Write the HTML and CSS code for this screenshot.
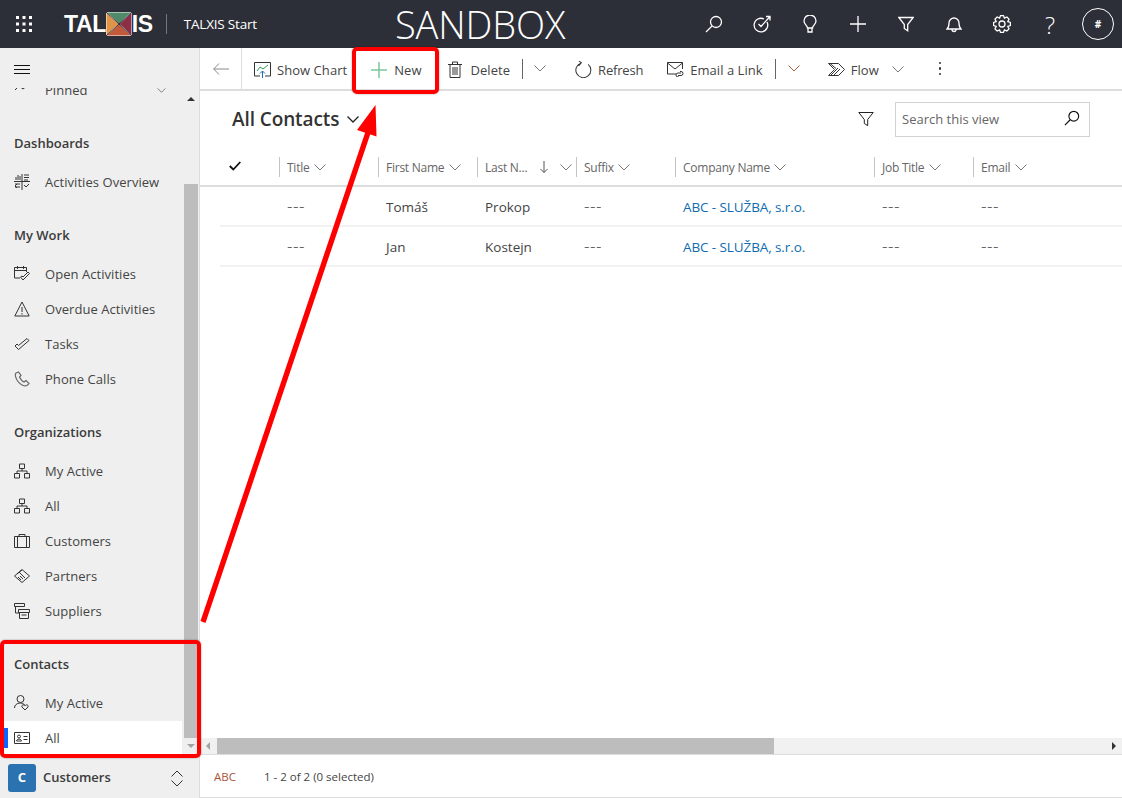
FILE: index.html
```html
<!DOCTYPE html>
<html lang="en">
<head>
    <meta charset="UTF-8">
    <meta name="viewport" content="width=device-width, initial-scale=1.0">
    <title>All Contacts - TALXIS Start</title>
    <link rel="stylesheet" href="styles.css">
</head>
<body>
    <svg class="sprites" width="0" height="0">
        <symbol id="chev" viewBox="0 0 12 7"><path d="M.5.5 6 6 11.500.5"/></symbol>
        <symbol id="org" viewBox="0 0 16 16"><path d="M5.500 1h5v4.500h-5zM.5 10.500h5V15h-5zM10.500 10.500h5V15h-5zM8 5.500V8M3 10.500V8h10v2.500"/></symbol>
        <symbol id="loupe" viewBox="0 0 18 18"><circle cx="11" cy="7" r="5.500"/><path d="M7 11 1 17"/></symbol>
        <symbol id="funnel" viewBox="0 0 16 16"><path d="M.8 1.500h14.400L9.700 8.500v6.200L6.300 12.500v-4z"/></symbol>
    </svg>

    <header class="topbar">
        <svg class="waffle" width="16" height="16" viewBox="0 0 16 16">
            <path d="M0 0h3v3H0zM6.500 0h3v3h-3zM13 0h3v3h-3zM0 6.500h3v3H0zM6.500 6.500h3v3h-3zM13 6.500h3v3h-3zM0 13h3v3H0zM6.500 13h3v3h-3zM13 13h3v3h-3z"/>
        </svg>
        <div class="logo">
            <span>TAL</span>
            <svg width="26" height="24" viewBox="0 0 26 24">
                <path fill="#4f8a6b" d="M0 0h26L13 12z"/>
                <path fill="#e09447" d="M0 0v24l13-12z"/>
                <path fill="#8c2f45" d="M26 0v24L13 12z"/>
                <path fill="#c2593b" d="M0 24h26L13 12z"/>
                <path stroke="#2d2f38" d="M0 0l26 24M26 0 0 24"/>
            </svg>
            <span>IS</span>
        </div>
        <div class="app-name">TALXIS Start</div>
        <div class="env-name">SANDBOX</div>
        <nav class="top-icons">
            <a><svg width="18" height="18"><use href="#loupe"/></svg></a>
            <a><svg width="18" height="18" viewBox="0 0 18 18"><path d="M14 7a6.800 6.800 0 1 1-3-3M5.500 9l2.500 2.500L17 1.500M13 1.500h4v4"/></svg></a>
            <a><svg width="14" height="18" viewBox="0 0 14 18"><path d="M4.500 13c0-2.500-3.500-3.500-3.500-7a6 6 0 0 1 12 0c0 3.500-3.500 4.500-3.500 7zM5 13v4h4v-4"/></svg></a>
            <a><svg width="18" height="18" viewBox="0 0 18 18"><path d="M9 1v16M1 9h16"/></svg></a>
            <a><svg width="16" height="16"><use href="#funnel"/></svg></a>
            <a><svg width="16" height="18" viewBox="0 0 16 18"><path d="M1 14c2-1.500 2-3 2-6a5 5 0 0 1 10 0c0 3 0 4.500 2 6zM6 14.500a2 2 0 0 0 4 0"/></svg></a>
            <a><svg width="18" height="18" viewBox="0 0 18 18"><circle cx="9" cy="9" r="3"/><path d="M7.500.6h3l.9 2.600 2.500-1.200 2.100 2.100-1.200 2.500 2.600.9v3l-2.600.9 1.200 2.500-2.100 2.100-2.500-1.200-.9 2.600h-3l-.9-2.600-2.500 1.200L2 13.900l1.200-2.500-2.600-.9v-3l2.600-.9L2 4.100 4.100 2l2.500 1.200z"/></svg></a>
            <a class="help">?</a>
            <a><span class="avatar">#</span></a>
        </nav>
    </header>

    <div class="shell">
        <aside class="sidebar">
            <div class="burger"><span></span><span></span><span></span></div>
            <div class="side-body">
                <div class="nav-list">
                    <div class="nav-row pinned">
                        <svg width="16" height="16" viewBox="0 0 16 16"><path d="M1 8l4-4 4 3 5-4"/></svg>
                        <span>Pinned</span>
                        <svg class="pin-chev" width="9" height="5"><use href="#chev"/></svg>
                    </div>

                    <h3>Dashboards</h3>
                    <div class="nav-row">
                        <svg width="16" height="16" viewBox="0 0 16 16"><path d="M8 0v16M0 7.500h16M2 6V3M4 6V1M6 6V2M10 1h5M10 3.500h5M10 6h4M1 10h5M1 13h5M3 10l-2 2 2 2M10 11l2 2 3-3"/></svg>
                        <span>Activities Overview</span>
                    </div>

                    <h3>My Work</h3>
                    <div class="nav-row">
                        <svg width="16" height="16" viewBox="0 0 16 16"><path d="M6 12H.5V1.500h12V6M.5 4.500h12M3.500 0v3M9.500 0v3M6.500 11l2.500 3 6.500-6.500-1.500-1.500-5 5-1-1z"/></svg>
                        <span>Open Activities</span>
                    </div>
                    <div class="nav-row">
                        <svg width="16" height="16" viewBox="0 0 16 16"><path d="M8 1 .8 15h14.400zM8 6v5M8 12v1.500"/></svg>
                        <span>Overdue Activities</span>
                    </div>
                    <div class="nav-row">
                        <svg width="16" height="16" viewBox="0 0 16 16"><path d="M1 10l3.500 3.500L15 4.500l-2-2-8.500 7-1.500-1.500z"/></svg>
                        <span>Tasks</span>
                    </div>
                    <div class="nav-row">
                        <svg class="soft" width="16" height="16" viewBox="0 0 16 16"><path d="M4.500 1 2 2C.5 3 1.500 7 4 10.500s6.500 5 9 4l2-2-3-3-2 1.500C8.500 10.500 6.500 8 5.500 6L7 4.500z"/></svg>
                        <span>Phone Calls</span>
                    </div>

                    <h3>Organizations</h3>
                    <div class="nav-row">
                        <svg width="16" height="16"><use href="#org"/></svg>
                        <span>My Active</span>
                    </div>
                    <div class="nav-row">
                        <svg width="16" height="16"><use href="#org"/></svg>
                        <span>All</span>
                    </div>
                    <div class="nav-row">
                        <svg width="16" height="16" viewBox="0 0 16 16"><path d="M.5 3.500h15v11H.5zM3.500 3.500v11M12.500 3.500v11M5 3.500v-2h6v2"/></svg>
                        <span>Customers</span>
                    </div>
                    <div class="nav-row">
                        <svg width="16" height="16" viewBox="0 0 16 16"><path d="M8 1.500 15.500 8 8 14.500.5 8zM3 6l5-4M5 4l6 6M4 9l3 3M6 8l3 3"/></svg>
                        <span>Partners</span>
                    </div>
                    <div class="nav-row">
                        <svg width="16" height="16" viewBox="0 0 16 16"><path d="M.5.500h10v3H.5zM1.500 3.500V10H5M4.500 6.500h11v3h-11zM5.500 9.500v6h9v-6M7.500 12h5"/></svg>
                        <span>Suppliers</span>
                    </div>

                    <h3>Contacts</h3>
                    <div class="nav-row">
                        <svg width="16" height="16" viewBox="0 0 16 16"><circle cx="6.500" cy="4" r="3.500"/><path d="M.5 13c0-6 9-6 10-3M11 15l-3-3c-1-2 2-3 3-1.200 1-1.800 4-.8 3 1.200z"/></svg>
                        <span>My Active</span>
                    </div>
                    <div class="nav-row current">
                        <svg width="16" height="16" viewBox="0 0 16 16"><path d="M.5 2.500h15v11H.5z"/><circle cx="5" cy="6.500" r="1.500"/><path d="M2.500 11c0-2.500 5-2.500 5 0zM9.500 6.500h4M9.500 9.500h4"/></svg>
                        <span>All</span>
                    </div>
                </div>
                <div class="vscroll">
                    <i class="tri-up"></i>
                    <div class="vthumb"></div>
                    <i class="tri-down"></i>
                </div>
            </div>
            <div class="area-switch">
                <span class="area-tile">C</span>
                <span class="area-name">Customers</span>
                <svg width="12" height="17" viewBox="0 0 12 17"><path d="M.5 6.500 6 1l5.500 5.500M.5 10.500 6 16l5.500-5.500"/></svg>
            </div>
        </aside>

        <main class="content">
            <div class="cmdbar">
                <div class="back">
                    <svg width="16" height="12" viewBox="0 0 16 12"><path d="M6 .5.7 6 6 11.500M.7 6H16"/></svg>
                </div>
                <div class="cmd">
                    <svg width="17" height="16" viewBox="0 0 17 16"><path d="M6 14H.5V.5h16V14H11"/><path class="green" d="M3 9l3-4 3 2 5-4"/><path class="blue" d="M8.500 16V9M6 11.500 8.500 9l2.500 2.500"/></svg>
                    <span>Show Chart</span>
                </div>
                <div class="cmd cmd-new">
                    <svg width="16" height="16" viewBox="0 0 16 16"><path d="M8 0v16M0 8h16"/></svg>
                    <span>New</span>
                </div>
                <div class="cmd cmd-delete">
                    <svg width="14" height="17" viewBox="0 0 14 17"><path d="M0 3.500h14M2 3.500v13h10v-13M4.500 3.500V1h5v2.500M5 6v8M7 6v8M9 6v8"/></svg>
                    <span>Delete</span>
                </div>
                <div class="cmd-sep"></div>
                <div class="cmd-chev"><svg width="12" height="7"><use href="#chev"/></svg></div>
                <div class="cmd cmd-refresh">
                    <svg width="17" height="17" viewBox="0 0 17 17"><path d="M5 2.500a7.500 7.500 0 1 0 7 0M1.500 .5 5 2.500 3 6" transform="rotate(12 8.500 8.500)"/></svg>
                    <span>Refresh</span>
                </div>
                <div class="cmd">
                    <svg width="17" height="15" viewBox="0 0 17 15"><path d="M9 12H.5V.5h15V7M.5 1 8 7l7.500-6M11 13.500h3a2 2 0 0 0 0-4h-1M14 11h-3a2 2 0 0 0 0 4h1"/></svg>
                    <span>Email a Link</span>
                </div>
                <div class="cmd-sep"></div>
                <div class="cmd-chev rust"><svg width="12" height="7"><use href="#chev"/></svg></div>
                <div class="cmd cmd-flow">
                    <svg width="17" height="13" viewBox="0 0 17 13"><path d="M.5.500h10L16.500 6.500l-6 6H.5l6-6zM3 12 10 5M6 12l6-6M2 .5l6 5"/></svg>
                    <span>Flow</span>
                    <svg class="flow-chev" width="12" height="7"><use href="#chev"/></svg>
                </div>
                <div class="cmd-more"><i></i><i></i><i></i></div>
            </div>

            <div class="view-head">
                <h1>All Contacts</h1>
                <svg class="title-chev" width="12" height="7"><use href="#chev"/></svg>
                <svg class="view-filter" width="16" height="16"><use href="#funnel"/></svg>
                <div class="searchbox">
                    <span>Search this view</span>
                    <svg width="16" height="16"><use href="#loupe"/></svg>
                </div>
            </div>

            <div class="grid">
                <div class="grid-row grid-head">
                    <div class="check-col"><svg width="12" height="10" viewBox="0 0 12 10"><path d="M.8 5 4.300 8.500 11.300 1"/></svg></div>
                    <div class="col"><span>Title</span><svg width="12" height="7"><use href="#chev"/></svg></div>
                    <div class="col"><span>First Name</span><svg width="12" height="7"><use href="#chev"/></svg></div>
                    <div class="col"><span>Last N...</span><svg class="sort" width="8" height="12" viewBox="0 0 8 12"><path d="M4 0v11.500M.5 8 4 11.500 7.500 8"/></svg><svg width="12" height="7"><use href="#chev"/></svg></div>
                    <div class="col"><span>Suffix</span><svg width="12" height="7"><use href="#chev"/></svg></div>
                    <div class="col"><span>Company Name</span><svg width="12" height="7"><use href="#chev"/></svg></div>
                    <div class="col"><span>Job Title</span><svg width="12" height="7"><use href="#chev"/></svg></div>
                    <div class="col"><span>Email</span><svg width="12" height="7"><use href="#chev"/></svg></div>
                </div>
                <div class="grid-row data-row">
                    <div class="check-col"></div>
                    <div class="cell dash">---</div>
                    <div class="cell">Tomáš</div>
                    <div class="cell">Prokop</div>
                    <div class="cell dash">---</div>
                    <div class="cell link">ABC - SLUŽBA, s.r.o.</div>
                    <div class="cell dash">---</div>
                    <div class="cell dash">---</div>
                </div>
                <div class="grid-row data-row">
                    <div class="check-col"></div>
                    <div class="cell dash">---</div>
                    <div class="cell">Jan</div>
                    <div class="cell">Kostejn</div>
                    <div class="cell dash">---</div>
                    <div class="cell link">ABC - SLUŽBA, s.r.o.</div>
                    <div class="cell dash">---</div>
                    <div class="cell dash">---</div>
                </div>
            </div>

            <div class="hscroll">
                <i class="tri-left"></i>
                <div class="hthumb"></div>
                <i class="tri-right"></i>
            </div>
            <div class="statusbar">
                <span class="abc">ABC</span>
                <span>1 - 2 of 2 (0 selected)</span>
            </div>
        </main>
    </div>

    <!-- annotations drawn over the screenshot -->
    <div class="mark mark-new"></div>
    <div class="mark mark-contacts"></div>
    <svg class="arrow" width="1122" height="798" viewBox="0 0 1122 798">
        <path d="M200.500 621 366 130l5 2L205.500 623z"/>
        <path d="M375.500 105 357 130l19.500 6.500z"/>
    </svg>
</body>
</html>
```

FILE: styles.css
```css
* {
    box-sizing: border-box;
}
html, body {
    height: 100%;
}
body {
    margin: 0;
    overflow: hidden;
    position: relative;
    font-family: "Open Sans", "Noto Sans", sans-serif;
    font-size: 13px;
    color: #333;
    background: #fff;
    display: flex;
    flex-direction: column;
}
svg {
    flex: none;
    display: block;
    fill: none;
    stroke: currentColor;
    stroke-width: 1;
}
.sprites {
    position: absolute;
}

/* top bar */
.topbar {
    height: 48px;
    flex: none;
    background: #2d2f38;
    color: #fff;
    display: flex;
    align-items: center;
    padding-left: 16px;
}
.waffle {
    fill: #fff;
    stroke: none;
}
.logo {
    display: flex;
    align-items: center;
    margin-left: 32px;
    font-family: "Liberation Sans", sans-serif;
    font-size: 23px;
    font-weight: 700;
    letter-spacing: -0.4px;
}
.app-name {
    margin-left: 13px;
    padding-left: 17px;
    height: 20px;
    line-height: 20px;
    border-left: 1px solid #777;
    font-size: 13.500px;
    letter-spacing: -0.2px;
}
.env-name {
    margin-left: 138px;
    font-size: 38px;
    font-weight: 300;
    letter-spacing: -0.1px;
}
.top-icons {
    margin-left: auto;
    display: flex;
    align-items: center;
}
.top-icons a {
    width: 48px;
    height: 48px;
    display: flex;
    align-items: center;
    justify-content: center;
}
.top-icons svg {
    stroke-width: 1.300;
}
.top-icons .help {
    font-size: 24px;
    font-weight: 300;
}
.avatar {
    width: 32px;
    height: 32px;
    border: 1px solid #fff;
    border-radius: 50%;
    display: flex;
    align-items: center;
    justify-content: center;
    font-size: 10px;
    font-weight: 700;
}

.shell {
    flex: 1;
    min-height: 0;
    display: flex;
}

/* left navigation */
.sidebar {
    width: 200px;
    flex: none;
    background: #efefef;
    border-right: 1px solid #ddd;
    display: flex;
    flex-direction: column;
}
.burger {
    height: 40px;
    flex: none;
    padding: 17px 0 0 14px;
}
.burger span {
    display: block;
    width: 16px;
    height: 1px;
    background: #111;
    margin-bottom: 3px;
}
.side-body {
    flex: 1;
    min-height: 0;
    display: flex;
}
.nav-list {
    flex: 1;
    min-width: 0;
    overflow: hidden;
}
.nav-list h3 {
    margin: 25px 0 11px;
    padding-left: 14px;
    height: 21px;
    line-height: 21px;
    font-size: 13px;
    font-weight: 600;
    color: #3b3b3b;
}
.nav-row {
    height: 35px;
    display: flex;
    align-items: center;
    padding-left: 14px;
    color: #444;
    letter-spacing: 0.05px;
}
.nav-row svg {
    color: #333;
    margin-right: 15px;
}
.nav-row .soft {
    color: #666;
    stroke-width: 1.200;
}
.pinned {
    margin-top: -15.500px;
}
.pinned .pin-chev {
    margin: 0 0 0 auto;
    position: relative;
    right: 18px;
    color: #555;
}
.nav-row.current {
    background: #fff;
    margin: 0 2px 0 4px;
    padding-left: 10px;
    position: relative;
}
.nav-row.current::before {
    content: "";
    position: absolute;
    left: 0;
    top: 7px;
    bottom: 8px;
    width: 4px;
    background: #0f62fe;
}
.vscroll {
    width: 15px;
    flex: none;
    padding-right: 1px;
    display: flex;
    flex-direction: column;
    align-items: center;
}
.vthumb {
    flex: 1;
    width: 100%;
    margin-bottom: 6px;
    background: #bdbdbd;
}
.tri-up, .tri-down {
    width: 0;
    height: 0;
    border-left: 4px solid transparent;
    border-right: 4px solid transparent;
}
.tri-up {
    margin: 9px 0 83px;
    border-bottom: 4px solid #333;
}
.tri-down {
    margin-bottom: 10px;
    border-top: 4px solid #a3a3a3;
}
.area-switch {
    height: 40px;
    flex: none;
    display: flex;
    align-items: center;
    padding: 0 16px 0 8px;
}
.area-tile {
    width: 28px;
    height: 28px;
    border-radius: 3px;
    background: #2b72b0;
    color: #fff;
    font-weight: 700;
    font-size: 13px;
    display: flex;
    align-items: center;
    justify-content: center;
    padding-bottom: 3px;
}
.area-name {
    margin: 0 auto 2px 7px;
    font-weight: 600;
    color: #3b3b3b;
}

/* main column */
.content {
    flex: 1;
    min-width: 0;
    display: flex;
    flex-direction: column;
}
.cmdbar {
    height: 43px;
    flex: none;
    border-bottom: 2px solid #ddd;
    display: flex;
    align-items: stretch;
}
.back {
    width: 42px;
    border-right: 1px solid #ddd;
    display: flex;
    align-items: center;
    justify-content: center;
    color: #8a8a8a;
}
.cmd {
    display: flex;
    align-items: center;
    padding: 2px 12px 0;
    gap: 6px;
    white-space: nowrap;
    color: #444;
    letter-spacing: 0.05px;
}
.cmd svg {
    color: #333;
}
.cmd .green {
    stroke: #2c9e5a;
}
.cmd .blue {
    stroke: #1a6fb5;
}
.cmd-new {
    gap: 7px;
}
.cmd-new svg {
    color: #7cc79a;
    stroke-width: 1.500;
}
.cmd-delete {
    gap: 9px;
    margin-left: 2px;
}
.cmd-refresh {
    letter-spacing: -0.2px;
}
.cmd-sep {
    width: 1px;
    height: 20px;
    margin-top: 11px;
    background: #666;
}
.cmd-chev {
    width: 40px;
    padding-left: 11px;
    display: flex;
    align-items: center;
    color: #777;
}
.cmd-chev.rust {
    color: #a5623c;
    padding-left: 12px;
}
.cmd-flow {
    gap: 6px;
}
.cmd-flow .flow-chev {
    margin-left: 7px;
    color: #777;
}
.cmd-more {
    margin-left: 23px;
    width: 3px;
    display: flex;
    flex-direction: column;
    justify-content: center;
    gap: 3px;
}
.cmd-more i {
    display: block;
    width: 2.500px;
    height: 2.500px;
    border-radius: 50%;
    background: #333;
}

.view-head {
    height: 53px;
    flex: none;
    display: flex;
    align-items: center;
    padding: 3px 32px 0 32px;
}
.view-head h1 {
    margin: 0;
    font-size: 19px;
    font-weight: 600;
    color: #333;
    letter-spacing: -0.1px;
}
.title-chev {
    margin-left: 8px;
    color: #222;
    stroke-width: 1.300;
}
.view-filter {
    margin-left: auto;
    color: #222;
}
.searchbox {
    width: 195px;
    height: 35px;
    margin-left: 21px;
    border: 1px solid #d2d2d2;
    display: flex;
    align-items: center;
    justify-content: space-between;
    padding: 0 9px 0 6px;
    color: #666;
}
.searchbox svg {
    color: #111;
    margin-top: -2px;
    stroke-width: 1.300;
}

/* grid */
.grid {
    flex: 1;
    min-height: 0;
}
.grid-row {
    display: grid;
    grid-template-columns: 79px 99px 99px 99px 99px 199px 99px 99px;
}
.grid-head {
    height: 43px;
    padding: 13px 0 8px;
    border-bottom: 2px solid #ddd;
}
.check-col {
    padding: 4px 0 0 29px;
    color: #111;
}
.check-col svg {
    stroke-width: 1.800;
}
.col {
    border-left: 1px solid #c4c4c4;
    padding-left: 7px;
    display: flex;
    align-items: center;
    gap: 4.500px;
    font-size: 12px;
    color: #666;
    letter-spacing: -0.25px;
    white-space: nowrap;
}
.col svg {
    color: #777;
}
.col .sort {
    margin: 0 8px;
    color: #555;
}
.data-row {
    height: 40px;
    margin-left: 20px;
    grid-template-columns: 59px 99px 99px 99px 99px 199px 99px 99px;
    border-bottom: 2px solid #f2f2f2;
    align-items: center;
}
.cell {
    padding: 2px 0 0 8px;
    font-size: 13.500px;
    color: #444;
}
.cell.dash {
    font-size: 17px;
    font-weight: 300;
    line-height: 20px;
    letter-spacing: 0.5px;
    padding-top: 0;
}
.cell.link {
    color: #0f6cb0;
    letter-spacing: -0.1px;
}

.hscroll {
    height: 16px;
    flex: none;
    background: #f1f1f1;
    display: flex;
    align-items: center;
    padding: 0 6px;
}
.hthumb {
    width: 557px;
    height: 100%;
    margin-left: 7px;
    background: #bdbdbd;
}
.tri-left, .tri-right {
    width: 0;
    height: 0;
    border-top: 4px solid transparent;
    border-bottom: 4px solid transparent;
}
.tri-left {
    border-right: 4px solid #a3a3a3;
}
.tri-right {
    margin-left: auto;
    border-left: 4px solid #333;
}
.statusbar {
    height: 44px;
    flex: none;
    border-top: 1px solid #ddd;
    border-bottom: 1px solid #ddd;
    display: flex;
    align-items: center;
    padding-left: 14px;
    font-size: 11.500px;
    color: #444;
}
.statusbar .abc {
    width: 50px;
    color: #a8553a;
}

/* red annotations */
.mark {
    position: absolute;
    border: 4.500px solid #f00;
    border-radius: 5px;
    box-shadow: 0 0 2px rgba(0, 0, 0, 0.4);
}
.mark-new {
    left: 352px;
    top: 47px;
    width: 87px;
    height: 47px;
}
.mark-contacts {
    left: 0;
    top: 640px;
    width: 201px;
    height: 118px;
}
.arrow {
    position: absolute;
    left: 0;
    top: 0;
    pointer-events: none;
    fill: #f00;
    stroke: none;
}
```
